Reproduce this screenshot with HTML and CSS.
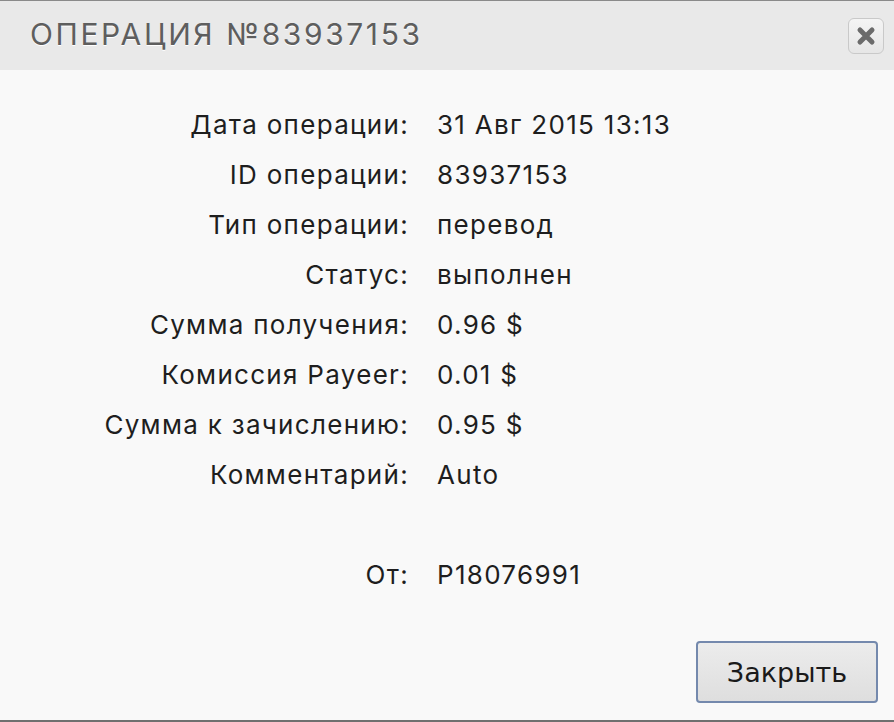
FILE: index.html
```html
<!DOCTYPE html>
<html lang="ru">
<head>
  <meta charset="UTF-8">
  <title>Операция №83937153</title>
  <link rel="stylesheet" href="styles.css">
</head>
<body>
  <div class="dialog">
    <div class="dialog-head">
      <h1>Операция №83937153</h1>
      <button class="dialog-x" title="Закрыть">
        <svg width="22" height="22" viewBox="0 0 22 22">
          <path d="M5 5 L17 17 M17 5 L5 17" stroke="#6b6b6b" stroke-width="5" stroke-linecap="round"/>
        </svg>
      </button>
    </div>

    <div class="dialog-body">
      <div class="op-row"><div class="op-label">Дата операции:</div><div class="op-val">31 Авг 2015 13:13</div></div>
      <div class="op-row"><div class="op-label">ID операции:</div><div class="op-val">83937153</div></div>
      <div class="op-row"><div class="op-label">Тип операции:</div><div class="op-val">перевод</div></div>
      <div class="op-row"><div class="op-label">Статус:</div><div class="op-val">выполнен</div></div>
      <div class="op-row"><div class="op-label">Сумма получения:</div><div class="op-val">0.96 $</div></div>
      <div class="op-row"><div class="op-label">Комиссия Payeer:</div><div class="op-val">0.01 $</div></div>
      <div class="op-row"><div class="op-label">Сумма к зачислению:</div><div class="op-val">0.95 $</div></div>
      <div class="op-row"><div class="op-label">Комментарий:</div><div class="op-val">Auto</div></div>
      <div class="op-row op-from"><div class="op-label">От:</div><div class="op-val">P18076991</div></div>
    </div>

    <div class="dialog-foot">
      <button class="btn-close">Закрыть</button>
    </div>
  </div>
</body>
</html>
```

FILE: styles.css
```css
html, body {
  margin: 0;
  padding: 0;
  height: 100%;
}
body {
  background: #f8f8f8;
  font-family: 'Inter', 'Noto Sans', Arial, sans-serif;
  color: #1e1e1e;
}
.dialog {
  height: 722px;
  box-sizing: border-box;
  border-top: 1px solid #8a8a8a;
  border-bottom: 2px solid #6f6f6f;
  display: flex;
  flex-direction: column;
  background: #f9f9f9;
}

/* Шапка */
.dialog-head {
  height: 69px;
  background: #e9e9e9;
  display: flex;
  align-items: center;
  justify-content: space-between;
  padding: 0 10px 0 30px;
}
.dialog-head h1 {
  margin: 0 0 4px 0;
  font-size: 30px;
  font-weight: 400;
  letter-spacing: 2.6px;
  text-transform: uppercase;
  color: #5e5e5e;
  text-shadow: 0 1px 0 #fff;
}
.dialog-x {
  width: 36px;
  height: 36px;
  border: 1px solid #c9c9c9;
  border-radius: 6px;
  background: linear-gradient(#f4f4f4, #e6e6e6);
  display: flex;
  align-items: center;
  justify-content: center;
  padding: 0;
  cursor: pointer;
}

/* Данные операции */
.dialog-body {
  flex: 1;
  padding-top: 29px;
}
.op-row {
  display: grid;
  grid-template-columns: 409px 1fr;
  column-gap: 28px;
  height: 50px;
  align-items: center;
  font-size: 26px;
  letter-spacing: 1.3px;
}
.op-row.op-from {
  margin-top: 50px;
}
.op-label {
  text-align: right;
}

.dialog-foot {
  display: flex;
  justify-content: flex-end;
  padding: 0 16px 17px 0;
}
.btn-close {
  width: 182px;
  height: 62px;
  border: 2px solid #7489ad;
  border-radius: 4px;
  background: linear-gradient(#ececec, #dedede);
  font-family: 'DejaVu Sans', 'Noto Sans', sans-serif;
  font-size: 27px;
  color: #1a1a1a;
  cursor: pointer;
}
```
